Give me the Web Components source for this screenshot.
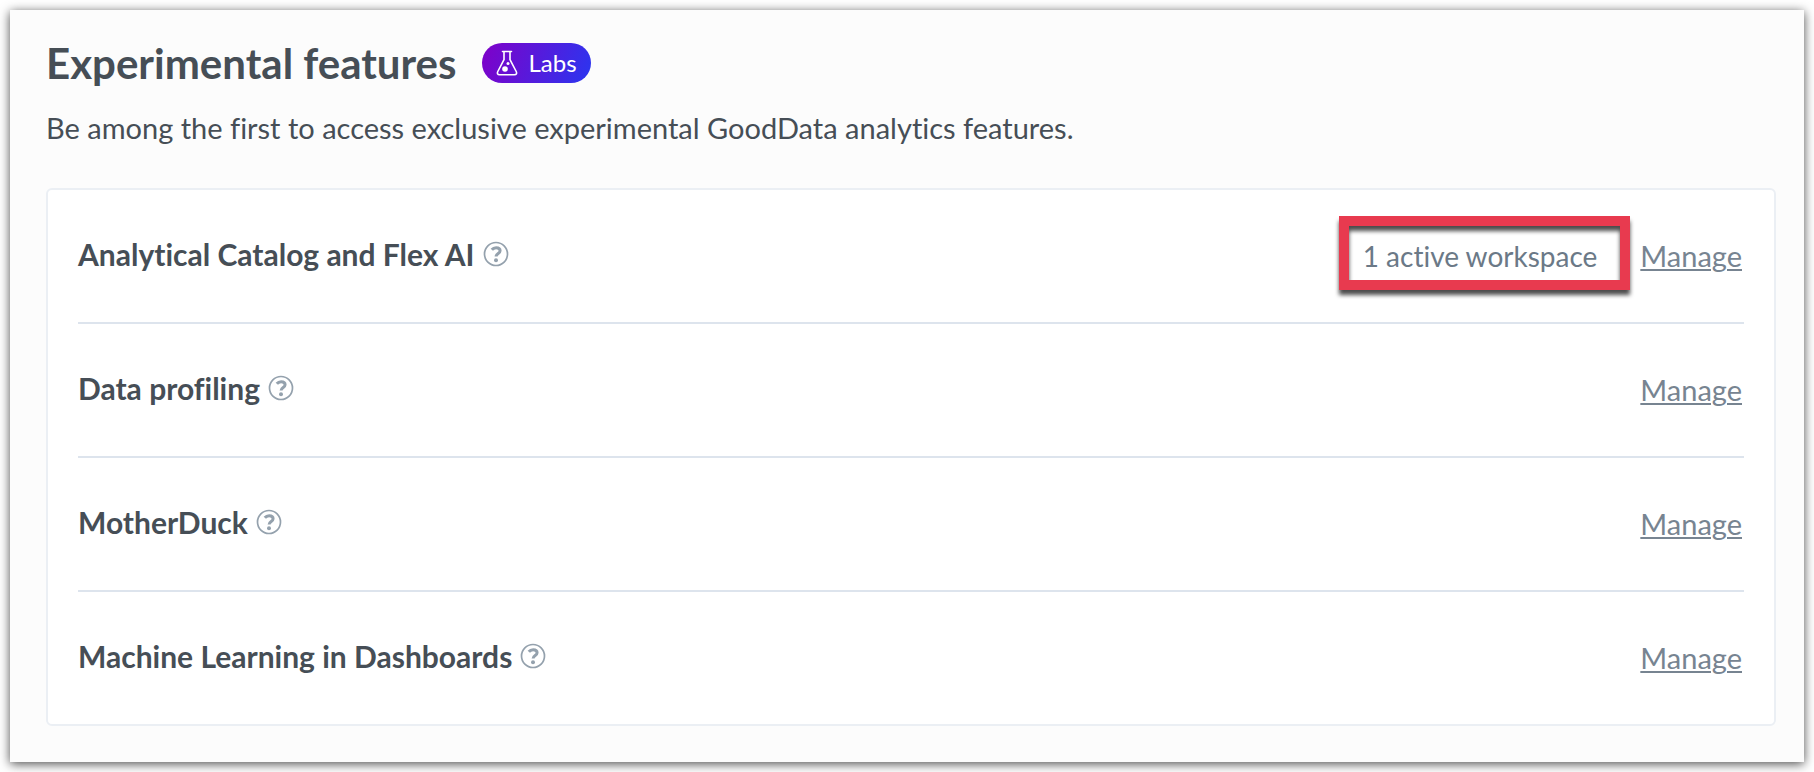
<!DOCTYPE html>
<html lang="en">
<head>
<meta charset="UTF-8">
<meta name="viewport" content="width=device-width, initial-scale=1">
<title>Experimental features</title>
<style>
    body {
        margin: 0;
        padding: 10px;
        background-color: #ffffff;
        color: #464e56;
        font-family: Lato, "Liberation Sans", sans-serif;
        font-size: 29px;
        line-height: 36px;
        font-variant-ligatures: none;
    }
</style>
</head>
<body>
<settings-panel>
    <span slot="title">Experimental features</span>
    <labs-badge slot="badge">Labs</labs-badge>
    <span slot="description">Be among the first to access exclusive experimental GoodData analytics features.</span>
    <feature-row name="Analytical Catalog and Flex AI">
        <highlight-box slot="status">1 active workspace</highlight-box>
    </feature-row>
    <feature-row name="Data profiling"></feature-row>
    <feature-row name="MotherDuck"></feature-row>
    <feature-row name="Machine Learning in Dashboards"></feature-row>
</settings-panel>

<script>
class SettingsPanel extends HTMLElement {
    connectedCallback() {
        this.attachShadow({ mode: 'open' });
        this.shadowRoot.innerHTML = `
            <style>
                :host {
                    display: block;
                    padding: 28px 28px 36px 36px;
                    background-color: #fcfcfc;
                    box-shadow: 0 2px 10px rgba(0, 0, 0, 0.7);
                }
                header {
                    display: flex;
                    align-items: center;
                    gap: 26px;
                }
                h1 {
                    margin: 0;
                    font-size: 42px;
                    font-weight: 700;
                    line-height: 50px;
                }
                p {
                    margin: 22px 0 42px;
                }
                .card {
                    border: 2px solid #ebeff4;
                    border-radius: 6px;
                    padding: 0 30px;
                    background-color: #ffffff;
                }
            </style>
            <header>
                <h1><slot name="title"></slot></h1>
                <slot name="badge"></slot>
            </header>
            <p><slot name="description"></slot></p>
            <div class="card"><slot></slot></div>
        `;
    }
}
customElements.define('settings-panel', SettingsPanel);

class LabsBadge extends HTMLElement {
    connectedCallback() {
        this.attachShadow({ mode: 'open' });
        this.shadowRoot.innerHTML = `
            <style>
                :host {
                    display: inline-flex;
                    align-items: center;
                    gap: 10px;
                    padding: 0 14px;
                    border-radius: 20px;
                    background: linear-gradient(110deg, #8000c8, #2a36f0);
                    color: #ffffff;
                    font-size: 24px;
                    line-height: 40px;
                }
                svg {
                    display: block;
                    flex-shrink: 0;
                }
            </style>
            <svg width="22" height="26" viewBox="0 0 22 26" fill="none" stroke="#ffffff" stroke-width="1.6" stroke-linecap="round" stroke-linejoin="round" aria-hidden="true">
                <path d="M6.5 1.5h9M8 1.5v8.2L1.800 21.500c-.9 1.800-.2 3.200 1.700 3.200h15c1.900 0 2.600-1.400 1.700-3.200L14 9.700V1.500"/>
                <circle cx="9" cy="19" r="2.8" fill="#ffffff" stroke="none"/>
                <circle cx="12" cy="13.5" r="1.5" fill="#ffffff" stroke="none"/>
            </svg>
            <slot></slot>
        `;
    }
}
customElements.define('labs-badge', LabsBadge);

class FeatureRow extends HTMLElement {
    connectedCallback() {
        this.attachShadow({ mode: 'open' });
        this.shadowRoot.innerHTML = `
            <style>
                :host {
                    display: flex;
                    align-items: center;
                    justify-content: space-between;
                    padding: 44px 0 48px;
                }
                :host(:not(:last-of-type)) {
                    border-bottom: 2px solid #dde4ed;
                }
                .name, .actions {
                    display: flex;
                    align-items: center;
                }
                .name {
                    gap: 8px;
                }
                h2 {
                    margin: 0;
                    font-size: 30px;
                    font-weight: 700;
                    line-height: 36px;
                }
                button {
                    padding: 0;
                    border: none;
                    background: none;
                    color: #94a1ad;
                    cursor: pointer;
                }
                svg {
                    display: block;
                }
                .actions {
                    gap: 10px;
                    padding: 4px 2px 0 0;
                }
                a {
                    color: #778491;
                    text-decoration: underline;
                    text-decoration-thickness: 2px;
                    text-underline-offset: 2px;
                }
            </style>
            <div class="name">
                <h2></h2>
                <button type="button" aria-label="Help">
                    <svg width="26" height="26" viewBox="0 0 26 26" fill="none" stroke="currentColor">
                        <circle cx="13" cy="13" r="11.5" stroke-width="1.7"/>
                        <path d="M8.800 8.800C10 7.300 11.500 6.700 13.100 6.700c2.400 0 4 1.200 4 3.100 0 2.800-4 2.700-4 5.800" stroke-width="3"/>
                        <circle cx="13" cy="19.2" r="2" fill="currentColor" stroke="none"/>
                    </svg>
                </button>
            </div>
            <div class="actions">
                <slot name="status"></slot>
                <a href="#">Manage</a>
            </div>
        `;
        this.shadowRoot.querySelector('h2').textContent = this.getAttribute('name');
    }
}
customElements.define('feature-row', FeatureRow);

class HighlightBox extends HTMLElement {
    connectedCallback() {
        this.attachShadow({ mode: 'open' });
        this.shadowRoot.innerHTML = `
            <style>
                :host {
                    display: block;
                    position: relative;
                    padding: 0 33px 0 24px;
                    color: #6b7987;
                    font-size: 28px;
                }
                /* frame sits over the row, its shadow falls inside and outside */
                :host::before {
                    content: "";
                    position: absolute;
                    inset: -22px 0 -16px;
                    border: 10px solid #e83a4f;
                    filter: drop-shadow(0 5px 2px rgba(0, 0, 0, 0.7));
                }
            </style>
            <slot></slot>
        `;
    }
}
customElements.define('highlight-box', HighlightBox);
</script>
</body>
</html>
